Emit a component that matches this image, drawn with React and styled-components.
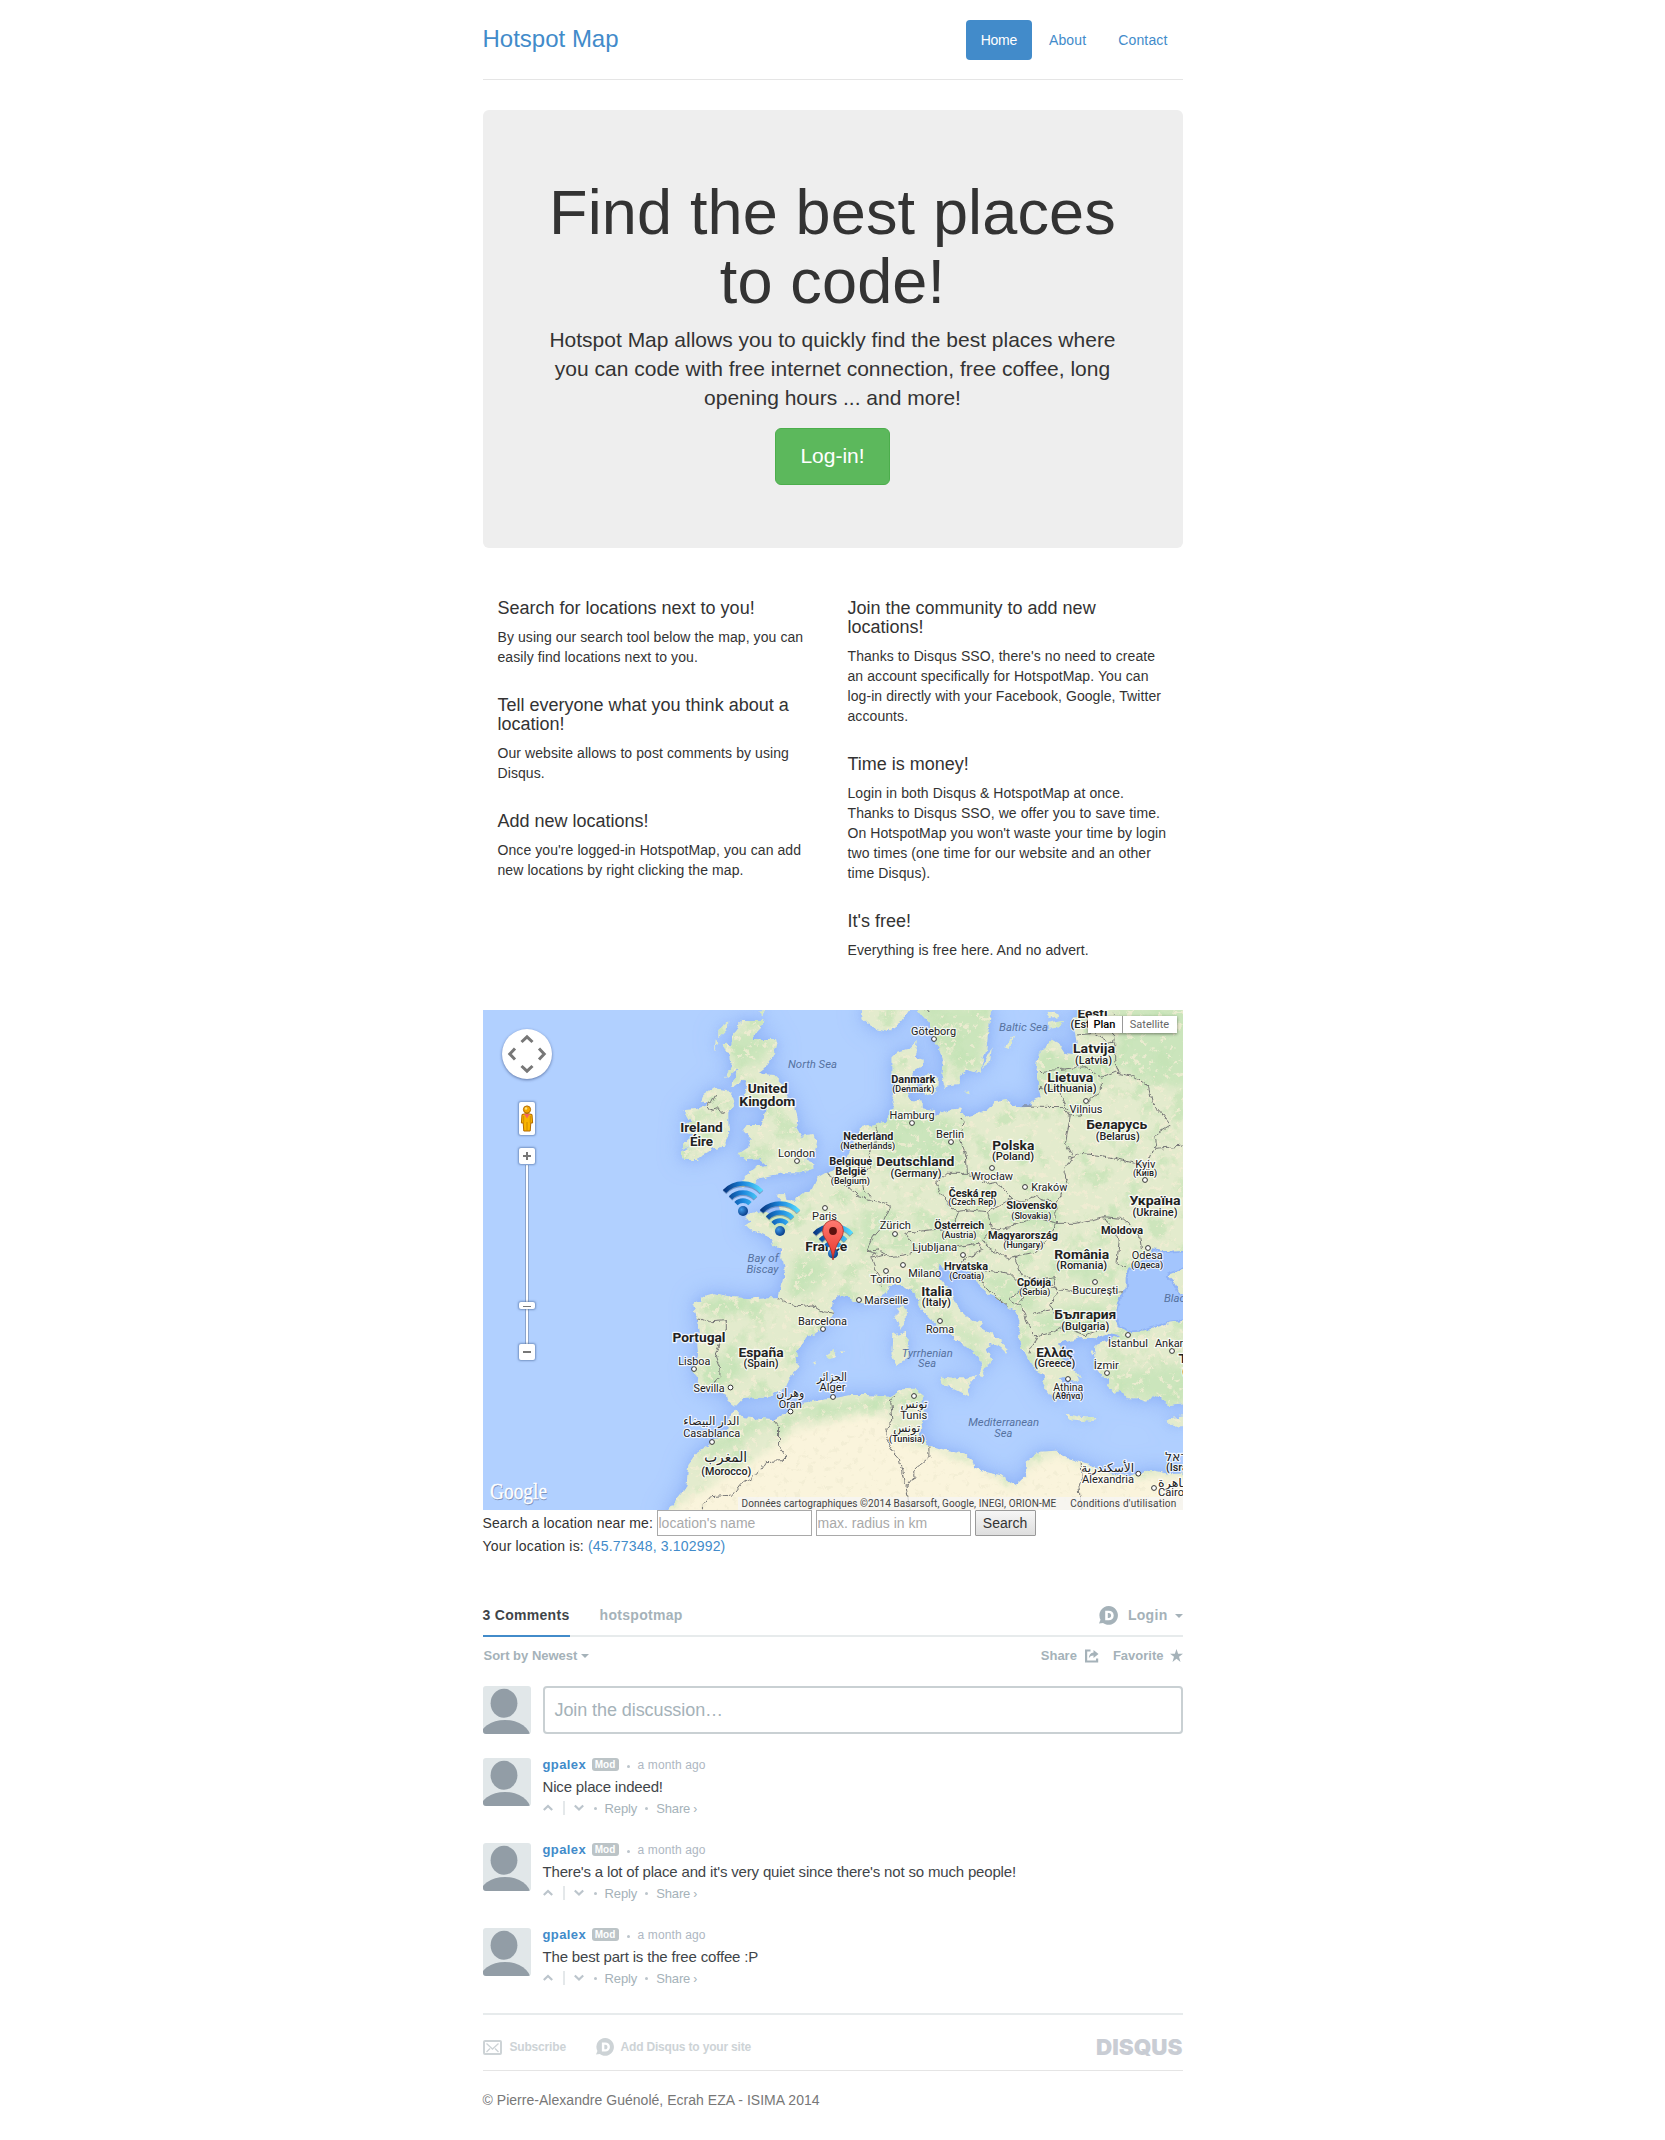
import React from "react";
import styled, { createGlobalStyle } from "styled-components";

const GlobalStyle = createGlobalStyle`
  *, *::before, *::after { box-sizing: border-box; }
  body {
    margin: 0;
    padding: 20px 0;
    background: #fff;
    color: #333;
    font: 14px/20px "Liberation Sans", Arial, sans-serif;
  }
  a { color: #428bca; text-decoration: none; }
`;

const Container = styled.div`
  width: 730px;
  margin: 0 auto;
  padding: 0 15px;
`;

/* ---------- header ---------- */

const Header = styled.header`
  display: flex;
  justify-content: space-between;
  height: 60px;
  border-bottom: 1px solid #e5e5e5;
  margin-bottom: 30px;
`;

const Brand = styled.a`
  font-size: 24px;
  line-height: 38px;
`;

const Nav = styled.nav`
  display: flex;
  gap: 2px;
  height: 40px;
`;

const NavLink = styled.a`
  padding: 10px 15px;
  border-radius: 4px;
  letter-spacing: ${(p) => (p.$active ? "-0.3px" : "0.14px")};
  color: ${(p) => (p.$active ? "#fff" : "#428bca")};
  background: ${(p) => (p.$active ? "#428bca" : "transparent")};
`;

/* ---------- hero ---------- */

const Jumbotron = styled.section`
  height: 438px;
  padding: 68px 55px 48px;
  border-radius: 6px;
  background: #eee;
  text-align: center;
`;

const HeroTitle = styled.h1`
  margin: 0 0 9px;
  font-size: 63px;
  font-weight: 400;
  line-height: 69px;
  letter-spacing: 0.15px;
`;

const HeroText = styled.p`
  margin: 0 5px 16px;
  font-size: 21px;
  line-height: 29px;
`;

const LoginButton = styled.button`
  height: 57px;
  padding: 0 24px 2px;
  border: 1px solid #4cae4c;
  border-radius: 6px;
  background: #5cb85c;
  color: #fff;
  font: 21px/27px "Liberation Sans", Arial, sans-serif;
`;

/* ---------- features ---------- */

const Features = styled.section`
  display: grid;
  grid-template-columns: 350px 350px;
  padding: 50px 0;
`;

const FeatureColumn = styled.div`
  display: flex;
  flex-direction: column;
  gap: 28px;
  padding: 0 12px 0 15px;
`;

const FeatureTitle = styled.h4`
  margin: 0 0 9px;
  padding-top: 1px;
  font-size: 18px;
  font-weight: 400;
  line-height: 19px;
`;

const FeatureText = styled.p`
  margin: 0;
  letter-spacing: 0.08px;
`;

/* ---------- map ---------- */

const MapFrame = styled.div`
  position: relative;
  height: 500px;
  overflow: hidden;
  background: #b1d0ff;
`;

const MapSvg = styled.svg`
  display: block;
`;

const PanControl = styled.div`
  position: absolute;
  left: 19px;
  top: 19px;
  width: 50px;
  height: 50px;
  border-radius: 50%;
  background: #fff;
  box-shadow: 0 1px 3px rgba(40, 60, 110, 0.6);
`;

const ControlBox = styled.div`
  position: absolute;
  left: 36px;
  top: ${(p) => p.$top}px;
  width: 16px;
  height: ${(p) => p.$height}px;
  display: flex;
  align-items: center;
  justify-content: center;
  border-radius: 2px;
  background: #fff;
  box-shadow: 0 0 2px 1px rgba(70, 100, 150, 0.55);
`;

const SliderTrack = styled.div`
  position: absolute;
  left: 42px;
  top: 155px;
  width: 4px;
  height: 179px;
  border: 1px solid #8ba4cc;
  border-width: 0 1px;
  background: #fff;
`;

const MapTypes = styled.div`
  position: absolute;
  right: 6px;
  top: 6px;
  display: flex;
  height: 17px;
  background: #fff;
  font: 11px/18px Roboto, sans-serif;
  box-shadow: 0 1px 3px rgba(0, 0, 0, 0.45);
`;

const MapType = styled.div`
  width: ${(p) => p.$width}px;
  text-align: center;
  color: ${(p) => (p.$active ? "#000" : "#666")};
  font-weight: ${(p) => (p.$active ? 500 : 400)};
  border-left: ${(p) => (p.$active ? "0" : "1px solid #999")};
`;

const Attribution = styled.div`
  position: absolute;
  right: 0;
  bottom: 0;
  display: flex;
  justify-content: space-between;
  width: 445px;
  height: 13px;
  padding: 0 6px 0 4px;
  background: rgba(245, 245, 245, 0.75);
  color: #444;
  font: 10px/13px Roboto, sans-serif;
  white-space: nowrap;
`;

const Credit = styled.span`
  letter-spacing: ${(p) => p.$spacing}px;
`;

/* Coordinates of the traced terrain use a 1568 x 1500 grid. */
const GRID = "scale(0.446429 0.333333)";

const MAINLAND =
  "M471 885L480 872 500 855 520 850 560 862 600 865 640 862 662 862 670 820 676 780 672 755 665 740 668 720 650 705 645 685 625 672 600 660 588 645 600 635 585 622 600 612 625 606 650 612 668 605 662 580 668 570 657 553 676 552 680 570 700 572 708 555 740 535 752 500 775 482 800 470 815 440 830 400 838 370 852 350 880 345 905 332 912 300 925 290 915 260 925 230 915 190 915 145 930 125 955 115 974 90 970 125 965 140 985 150 985 170 965 185 955 215 950 245 960 270 985 275 985 295 1010 300 1015 315 1040 300 1070 295 1082 320 1110 310 1140 290 1150 272 1175 267 1185 285 1205 292 1225 290 1232 270 1250 262 1245 240 1243 215 1240 180 1245 130 1260 110 1275 88 1290 100 1305 130 1320 132 1330 100 1325 60 1322 30 1335 10 1340 -20 1600 -20 1600 1180 1568 1180 1538 1185 1516 1165 1498 1155 1486 1175 1464 1165 1442 1165 1427 1140 1412 1145 1400 1130 1404 1110 1386 1095 1374 1065 1371 1035 1374 1005 1397 992 1427 978 1404 972 1375 985 1360 983 1337 985 1322 990 1300 998 1288 1000 1297 1020 1288 1035 1310 1060 1322 1085 1333 1112 1320 1115 1305 1100 1290 1105 1300 1120 1303 1150 1290 1145 1287 1175 1272 1160 1262 1140 1250 1115 1260 1100 1240 1085 1225 1055 1218 1035 1205 1010 1200 985 1205 960 1200 930 1195 905 1175 890 1150 865 1135 855 1110 825 1100 800 1080 775 1065 770 1055 800 1040 780 1022 765 1018 795 1035 825 1053 855 1064 895 1091 930 1120 940 1113 950 1143 975 1173 1010 1171 1028 1158 1010 1139 1000 1128 1015 1135 1035 1141 1050 1128 1070 1117 1105 1108 1100 1117 1075 1113 1045 1098 1025 1079 1005 1061 990 1038 965 1023 950 1001 925 982 895 971 865 960 840 938 825 915 825 900 850 882 865 859 880 837 880 814 860 799 855 784 870 781 900 785 912 770 945 744 970 725 980 703 1025 699 1045 709 1070 688 1100 680 1130 662 1145 643 1160 613 1160 583 1165 565 1190 550 1175 546 1155 527 1145 509 1140 490 1142 479 1135 482 1105 471 1085 482 1035 480 1005 486 975 482 935Z";
const AFRICA =
  "M553 1215L565 1202 583 1222 628 1228 650 1230 680 1205 710 1180 747 1172 785 1165 822 1155 859 1155 911 1160 938 1138 964 1136 988 1160 975 1185 993 1215 982 1245 979 1275 1001 1310 1031 1322 1076 1330 1098 1355 1100 1375 1128 1387 1158 1395 1191 1428 1218 1395 1218 1355 1247 1325 1285 1322 1300 1340 1344 1360 1404 1390 1449 1400 1494 1380 1540 1392 1600 1390 1600 1530 400 1530 415 1500 441 1455 456 1425 460 1365 482 1325 516 1295 546 1265Z";
const BLACK_SEA =
  "M1600 722L1540 728 1502 718 1490 740 1470 765 1450 775 1442 800 1442 835 1425 870 1416 920 1425 950 1450 964 1480 962 1500 952 1540 935 1600 925 1600 850 1561 850 1545 815 1530 795 1560 780 1600 765Z";
const ISLANDS =
  "M930 895L947 885 947 935 934 955 924 925ZM919 975L945 963 955 995 950 1045 926 1065 917 1035ZM1023 1100L1076 1105 1105 1097 1087 1125 1091 1160 1053 1135 1027 1120ZM1303 1212L1337 1220 1374 1225 1367 1236 1315 1228ZM1531 1235L1546 1223 1575 1218 1575 1245 1540 1248ZM766 1035L783 1020 792 1033 778 1048ZM800 1020L812 1022 806 1030ZM738 1062L746 1056 742 1068ZM1308 1068L1330 1085 1342 1108 1325 1098ZM1360 1020L1372 1024 1365 1032ZM1368 1058L1374 1062 1370 1072ZM848 -10L850 25 875 55 905 65 935 40 960 -10ZM970 -10L1000 40 1010 80 1022 120 1030 150 1027 195 1035 230 1068 225 1068 195 1085 180 1112 190 1117 165 1128 115 1132 65 1140 -10ZM1118 175L1140 112 1135 160ZM1170 115L1188 72 1180 120ZM1266 38L1300 30 1292 52 1266 56ZM1262 10L1280 5 1290 18 1270 25ZM955 225L970 222 972 240 958 248ZM990 195L1020 200 1016 245 990 255 985 225ZM1080 245L1088 240 1090 250Z";
const BRITAIN =
  "M780 45L850 45 845 70 820 95 815 105 885 105 890 125 875 160 855 190 835 205 880 210 905 235 920 270 945 310 955 345 948 365 965 395 1000 390 1012 410 1005 440 975 465 1000 475 1000 492 960 505 910 505 870 512 840 520 820 542 795 538 770 550 800 510 830 485 860 480 840 463 800 465 775 445 805 425 815 400 790 375 800 360 845 360 850 330 858 310 845 295 800 300 790 290 800 250 795 225 765 247 755 240 775 190 750 210 735 220 755 180 750 150 730 120 755 120 755 95 775 70ZM670 270L700 250 740 255 760 280 765 300 745 325 745 350 748 390 735 425 700 430 650 465 610 465 600 440 625 422 602 430 640 390 605 370 630 350 610 315 650 312 680 300 665 285ZM715 75L742 52 740 75 715 100ZM704 100L712 110 702 145ZM838 20L858 18 850 34ZM725 112L742 110 750 128 730 125Z";
const DESERT =
  "M415 1500L480 1450 560 1380 640 1320 690 1260 780 1235 850 1210 905 1220 930 1290 1001 1312 1100 1362 1191 1432 1225 1370 1285 1330 1400 1400 1600 1400 1600 1530 400 1530Z";

const FORESTS =
  "M700 745L760 735 780 800 730 850 680 855ZM845 620L905 600 890 690 850 720ZM880 300L930 300 1060 330 1080 420 1010 500 900 480ZM500 868L660 870 610 905 510 900ZM540 85L600 60 650 100 620 160 570 170ZM930 700L1100 665 1140 700 1000 735ZM1090 790L1190 800 1250 900 1200 900ZM1180 590L1290 590 1290 640 1200 650ZM1240 120L1400 170 1410 220 1250 230ZM1420 -10L1600 -10 1600 240 1500 220 1420 170ZM970 -10L1140 -10 1110 185 1040 150ZM1300 890L1400 880 1390 960 1250 970 1230 920ZM1380 1090L1600 1060 1600 1180 1450 1160ZM1010 900L1060 950 1130 990 1100 1010 1020 940ZM1340 700L1420 820 1300 800ZM490 1050L560 1040 600 1090 500 1130ZM510 1300L600 1230 640 1240 560 1310 480 1370ZM700 1190L900 1165 890 1200 720 1225Z";

const BORDERS =
  "M481 935L490 925 510 935 545 932 545 960 530 1000 520 1030 532 1070 530 1100 515 1120M660 865L680 880 710 890 735 885 760 905 785 910M650 1230L662 1250 662 1310 680 1340 670 1352 632 1355 615 1390 580 1420 560 1455 510 1460 485 1500M925 1155L913 1170 918 1230 900 1260 915 1320 935 1350 948 1430 957 1500M948 1430L965 1400 965 1380 1001 1340 1001 1312M1340 1362L1342 1400 1335 1430 1340 1500M772 485L780 505 800 510 815 530 840 560 870 570 900 580 913 590 900 630 895 650 875 680 860 720 880 730 870 745 900 735M883 350L880 400 865 430 868 470 850 500 855 540 870 560M860 725L885 720 910 740 945 735 975 720 955 690 945 670 970 665 1000 660 1050 655 1065 610M870 745L880 780 890 800 890 830M1015 520L1040 490 1085 490 1083 440 1070 390 1075 340 1068 325M1015 520L1030 560 1060 605 1090 600 1130 605 1165 580 1185 565M1085 490L1110 500 1130 525 1150 520 1170 540 1185 565 1210 575 1240 560 1260 570 1285 580 1310 520 1300 480 1320 440 1305 400 1315 320 1300 290 1207 288M1245 185L1280 180 1350 170 1385 205 1420 185M1310 318L1340 315 1360 270 1385 245 1385 215M1310 300L1290 245 1245 235M1420 190L1460 200 1490 225 1500 280 1520 310 1540 345 1515 365 1505 380 1510 415 1568 408M1310 445L1340 430 1400 440 1460 460 1490 465 1495 430 1510 415M1330 75L1370 70 1400 95 1415 100 1415 150 1425 190M1410 100L1415 50 1412 10M1130 605L1140 660 1180 650 1230 620 1285 640 1260 690 1235 730 1180 745 1130 715 1120 690 1140 660M1285 640L1330 640 1390 620 1430 625 1470 670 1475 720M1395 625L1425 690 1420 760 1440 770M1265 820L1290 840 1370 850 1435 845M1065 775L1085 740 1120 720M1100 775L1180 790 1210 830M1100 790L1140 850 1175 890M1190 740L1205 790 1230 810 1280 800 1285 850 1270 890 1290 920M1210 860L1200 880 1215 920 1225 960 1240 980 1225 1030M1240 980L1280 965 1300 950 1350 975 1380 960M1230 910L1270 900M1210 830L1180 870 1200 885M1000 720L1060 710 1110 700 1120 720M985 -5L1000 10M1282 585L1285 640";

const NORTH_IRISH_BORDER = "M708 265L695 290 678 298 690 315 712 308 725 325 740 322";

/* kind, text, centre x, baseline y, width */
const LABELS = [
  ["country", "United", 284.7, 83.3, 40], ["country", "Kingdom", 284.3, 96, 56],
  ["country", "Ireland", 218.5, 122.3, 42.5], ["country", "Éire", 218.5, 136, 23],
  ["sea", "North Sea", 329.5, 57.5, 49], ["city", "London", 313.5, 146.5, 37],
  ["city", "Paris", 341.5, 209.5, 25], ["country", "France", 343.3, 240.5, 42],
  ["sea", "Bay of", 280, 251.5, 31], ["sea", "Biscay", 279.5, 262.5, 32],
  ["city", "Göteborg", 450.5, 24.7, 45], ["sea", "Baltic Sea", 540.5, 20.7, 49],
  ["country", "Eesti", 609.5, 7.5, 30], ["sub", "(Estonia)", 609.5, 18, 44],
  ["country", "Latvija", 611, 43.3, 42], ["sub", "(Latvia)", 610.5, 53.5, 37],
  ["country", "Lietuva", 587.3, 71.5, 46], ["sub", "(Lithuania)", 587, 82, 53],
  ["city", "Vilnius", 603, 102.5, 33], ["minor", "Danmark", 430.3, 73, 44],
  ["tiny", "(Denmark)", 430.3, 82.3, 42], ["city", "Hamburg", 429, 109, 45],
  ["city", "Berlin", 467, 127.5, 28], ["minor", "Nederland", 385.3, 130, 50],
  ["tiny", "(Netherlands)", 384.7, 139.3, 55], ["country", "Polska", 530.3, 140, 42],
  ["sub", "(Poland)", 530, 150, 42], ["country", "Беларусь", 633.7, 119, 61],
  ["sub", "(Belarus)", 634.7, 130, 44], ["minor", "Belgique", 367.7, 154.7, 43],
  ["minor", "België", 367.7, 164.7, 31], ["tiny", "(Belgium)", 367.3, 174, 39],
  ["country", "Deutschland", 432.3, 156, 78], ["sub", "(Germany)", 433, 166.7, 51],
  ["city", "Wrocław", 509, 169.5, 42], ["city", "Kraków", 566.3, 180.5, 36],
  ["city", "Kyiv", 662.3, 158, 20], ["tiny", "(Київ)", 662, 166.3, 24],
  ["country", "Україна", 672, 195.3, 51], ["sub", "(Ukraine)", 672, 205.6, 45],
  ["minor", "Česká rep", 489.7, 186.5, 48], ["tiny", "(Czech Rep)", 489.3, 195.3, 48],
  ["minor", "Slovensko", 548.7, 199.3, 51], ["tiny", "(Slovakia)", 548.3, 208.6, 40],
  ["city", "Zürich", 412.3, 219.3, 31], ["minor", "Österreich", 476.3, 218.6, 50],
  ["tiny", "(Austria)", 476, 228, 35], ["minor", "Magyarország", 540, 228.6, 70],
  ["tiny", "(Hungary)", 540.3, 238, 40], ["minor", "Moldova", 639, 223.6, 42],
  ["city", "Ljubljana", 451.7, 240.7, 45], ["city", "Odesa", 664.3, 249.3, 31],
  ["country", "România", 598.7, 248.6, 55], ["sub", "(Romania)", 598.7, 259, 51],
  ["tiny", "(Одеса)", 664, 257.7, 32], ["city", "Torino", 402.7, 272.7, 31],
  ["city", "Milano", 441.7, 267, 33], ["minor", "Hrvatska", 483, 259.7, 44],
  ["tiny", "(Croatia)", 483.7, 268.7, 35], ["minor", "Србија", 551, 275.5, 34],
  ["tiny", "(Serbia)", 551.7, 284.7, 31], ["city", "Bucureşti", 612.3, 283.7, 46],
  ["country", "Italia", 453.7, 285.7, 31], ["sub", "(Italy)", 453.3, 295.5, 29],
  ["city", "Marseille", 403.3, 293.7, 44], ["city", "Roma", 457, 322.7, 28],
  ["country", "България", 602.3, 308.7, 62], ["sub", "(Bulgaria)", 602.3, 319.5, 48],
  ["sea", "Black Sea", 705, 291.5, 48], ["city", "İstanbul", 645, 336.7, 40],
  ["city", "Ankara", 689, 336.7, 34], ["country", "Türkiye", 720, 353, 49],
  ["sub", "(Turkey)", 720, 365, 42], ["sea", "Tyrrhenian", 444.3, 346.7, 51],
  ["sea", "Sea", 444, 357.3, 18], ["country", "Ελλάς", 571.7, 346.7, 37],
  ["sub", "(Greece)", 571.7, 357.3, 41], ["city", "İzmir", 623.3, 358.7, 25],
  ["city", "Athina", 585.3, 380.7, 30], ["tiny", "(Αθήνα)", 584.7, 389.3, 31],
  ["sea", "Mediterranean", 520.7, 415.7, 71], ["sea", "Sea", 520.3, 426.7, 18],
  ["arabic", "تونس", 431, 398.3, 27], ["city", "Tunis", 430.7, 408.7, 27],
  ["arabic", "تونس", 423.7, 422.3, 27], ["tiny", "(Tunisia)", 424, 432.3, 36],
  ["arabic", "الأسكندرية", 624.7, 461.5, 53], ["city", "Alexandria", 625, 472.7, 52],
  ["arabic", "القاهرة", 694, 476.5, 38], ["city", "Cairo", 688, 486, 26],
  ["arabic", "ישראל", 699, 451, 34], ["sub", "(Israel)", 700, 461.3, 34],
  ["city", "Barcelona", 339.5, 314.5, 49], ["country", "Portugal", 216, 331.7, 53],
  ["country", "España", 278, 346.7, 45], ["sub", "(Spain)", 278, 357.3, 35],
  ["city", "Lisboa", 211.3, 354.7, 32], ["city", "Sevilla", 226, 381.5, 31],
  ["arabic", "الجزائر", 349, 371, 30], ["city", "Alger", 349.5, 381.3, 26],
  ["arabic", "وهران", 307.3, 387.3, 28], ["city", "Oran", 307.3, 397.5, 23],
  ["arabic", "الدار البيضاء", 228.3, 415, 56], ["city", "Casablanca", 228.7, 427, 57],
  ["arabicLarge", "المغرب", 242.7, 452, 43], ["sub", "(Morocco)", 243.3, 464.5, 50],
];

const CITY_DOTS = [
  [314, 151], [342, 198], [451, 29], [603, 91], [429, 113], [468, 132], [509, 158],
  [542, 177], [662, 170], [412, 224], [480, 245], [665, 238], [403, 261], [420, 255],
  [612, 272], [376, 290], [457, 311], [645, 325], [689, 341], [624, 363], [585, 369],
  [431, 386], [655.3, 463.7], [671, 478], [340, 319], [211, 359], [247.5, 377.5],
  [350, 387], [307.5, 401.5], [229, 432],
];

const LABEL_STYLE = {
  country: { size: 13.5, weight: 700, halo: 2.6 },
  minor: { size: 11.5, weight: 700, halo: 2.4 },
  sub: { size: 11, weight: 500, halo: 2.2 },
  tiny: { size: 9.8, weight: 500, halo: 2 },
  city: { size: 11.3, weight: 400, halo: 2.4 },
  arabic: { size: 12, weight: 400, halo: 2.4 },
  arabicLarge: { size: 14.5, weight: 400, halo: 2.4 },
  sea: { size: 11.3, weight: 400, halo: 0 },
};

const MapText = styled.text`
  font-family: Roboto, "DejaVu Sans", sans-serif;
  font-size: ${(p) => LABEL_STYLE[p.$kind].size}px;
  font-weight: ${(p) => LABEL_STYLE[p.$kind].weight};
  font-style: ${(p) => (p.$kind === "sea" ? "italic" : "normal")};
  fill: ${(p) => (p.$kind === "sea" ? "#56729f" : "#222")};
  stroke: rgba(255, 255, 255, 0.8);
  stroke-width: ${(p) => LABEL_STYLE[p.$kind].halo}px;
  stroke-linejoin: round;
  paint-order: stroke;
  text-anchor: middle;
`;

const LogoText = styled.text`
  font: 23px "Liberation Serif", serif;
  fill: ${(p) => (p.$shadow ? "#7d93bd" : "#fff")};
  stroke: ${(p) => (p.$shadow ? "#7d93bd" : "#fff")};
  stroke-width: 0.3px;
`;

const WifiMarker = ({ x, y }) => (
  <g transform={`translate(${x} ${y})`}>
    <g fill="none" stroke="#12305f" strokeOpacity=".35" strokeWidth="5" transform="translate(0 1)">
      <path d="M-18.5 -19.5A25.5 25.5 0 0 1 18.5 -19.5" />
      <path d="M-12.5 -13.2A17.5 17.5 0 0 1 12.5 -13.2" />
    </g>
    <g fill="none" stroke="url(#wifi)" strokeWidth="4.6">
      <path d="M-18.5 -19.5A25.5 25.5 0 0 1 18.5 -19.5" />
      <path d="M-12.5 -13.2A17.5 17.5 0 0 1 12.5 -13.2" />
      <path d="M-7 -7.4A9.8 9.8 0 0 1 7 -7.4" />
    </g>
    <circle r="5" fill="url(#wifiDot)" />
  </g>
);

const EuropeMap = () => (
  <MapSvg width="700" height="500" viewBox="0 0 700 500">
    <defs>
      <filter id="glow" filterUnits="userSpaceOnUse" x="-30" y="-30" width="760" height="560">
        <feGaussianBlur stdDeviation="13" />
      </filter>
      <filter id="shore" filterUnits="userSpaceOnUse" x="-30" y="-30" width="760" height="560">
        <feGaussianBlur stdDeviation="4" />
      </filter>
      <filter id="rough" filterUnits="userSpaceOnUse" x="-10" y="-10" width="720" height="520" colorInterpolationFilters="sRGB">
        <feTurbulence type="fractalNoise" baseFrequency="0.14" numOctaves="3" seed="4" result="n" />
        <feDisplacementMap in="SourceGraphic" in2="n" scale="6" xChannelSelector="R" yChannelSelector="G" />
      </filter>
      <filter id="relief" filterUnits="userSpaceOnUse" x="-10" y="-10" width="720" height="520" colorInterpolationFilters="sRGB">
        <feTurbulence type="fractalNoise" baseFrequency="0.045" numOctaves="5" seed="9" result="n" />
        <feColorMatrix in="n" type="matrix" values="0 0 0 0 .765  0 0 0 0 .89  0 0 0 0 .71  5 0 0 0 -2.55" result="c" />
        <feComposite in="c" in2="SourceAlpha" operator="in" />
      </filter>
      <filter id="towns" filterUnits="userSpaceOnUse" x="-10" y="-10" width="720" height="520" colorInterpolationFilters="sRGB">
        <feTurbulence type="fractalNoise" baseFrequency="0.16" numOctaves="3" seed="22" result="n" />
        <feColorMatrix in="n" type="matrix" values="0 0 0 0 .95  0 0 0 0 .93  0 0 0 0 .83  0 9 0 0 -5.4" result="c" />
        <feComposite in="c" in2="SourceAlpha" operator="in" />
      </filter>
      <filter id="soft" filterUnits="userSpaceOnUse" x="-30" y="-30" width="760" height="560">
        <feGaussianBlur stdDeviation="4" />
      </filter>
      <linearGradient id="wifi" gradientUnits="userSpaceOnUse" x1="-19" y1="0" x2="19" y2="0">
        <stop offset="0" stopColor="#06357f" />
        <stop offset=".5" stopColor="#1c86dc" />
        <stop offset="1" stopColor="#55dcff" />
      </linearGradient>
      <radialGradient id="wifiDot" cx=".35" cy=".35" r=".7">
        <stop offset="0" stopColor="#3f9ae8" />
        <stop offset="1" stopColor="#063a86" />
      </radialGradient>
      <linearGradient id="pin" x1="0" y1="0" x2="0" y2="1">
        <stop offset="0" stopColor="#ff7a70" />
        <stop offset="1" stopColor="#e8352c" />
      </linearGradient>
      <g id="land">
        <g transform={GRID}>
          <path d={MAINLAND} />
          <path d={AFRICA} />
          <path d={ISLANDS} />
        </g>
        <path d={BRITAIN} transform="translate(-3 -5) scale(.333333)" />
      </g>
      <clipPath id="landClip">
        <path d={MAINLAND} transform={GRID} />
        <path d={AFRICA} transform={GRID} />
        <path d={ISLANDS} transform={GRID} />
        <path d={BRITAIN} transform="translate(-3 -5) scale(.333333)" />
      </clipPath>
    </defs>

    <rect width="700" height="500" fill="#b1d0ff" />
    <use href="#land" fill="#86abf5" opacity=".8" filter="url(#glow)" />
    <use href="#land" fill="#86abf5" opacity=".45" filter="url(#shore)" />

    <g filter="url(#rough)">
      <use href="#land" fill="#e3ebcd" />
      <g clipPath="url(#landClip)">
        <g filter="url(#soft)" opacity=".75">
          <path d={FORESTS} transform={GRID} fill="#c3e3b6" />
        </g>
        <use href="#land" filter="url(#relief)" opacity=".7" />
        <g filter="url(#soft)">
          <path d={DESERT} transform={GRID} fill="#faf4dc" />
        </g>
        <use href="#land" filter="url(#towns)" opacity=".8" />
      </g>
      <path d={BLACK_SEA} transform={GRID} fill="#a3c5fd" stroke="#90b3f6" strokeWidth="5" />
      <g fill="none" stroke="#777" strokeWidth="1">
        <g transform={GRID}><path d={BORDERS} vectorEffect="non-scaling-stroke" /></g>
        <g transform="translate(-3 -5) scale(.333333)">
          <path d={NORTH_IRISH_BORDER} vectorEffect="non-scaling-stroke" />
        </g>
      </g>
    </g>

    {CITY_DOTS.map(([x, y]) => (
      <circle key={`${x}-${y}`} cx={x} cy={y} r="2.4" fill="#fff" stroke="#333" strokeWidth="1" />
    ))}
    {LABELS.map(([kind, text, x, y, width]) => (
      <MapText key={`${text}-${x}`} $kind={kind} x={x} y={y} textLength={width} lengthAdjust="spacingAndGlyphs">
        {text}
      </MapText>
    ))}

    <WifiMarker x={260} y={201} />
    <WifiMarker x={297} y={221} />
    <WifiMarker x={350} y={243.5} />
    <path
      d="M350 250C349 241 346 234 342.500 229C340.500 226 339.700 223.500 339.700 220.500A10.300 10.300 0 0 1 360.300 220.500C360.300 223.500 359.500 226 357.500 229C354 234 351 241 350 250Z"
      fill="url(#pin)" stroke="#a82a22" strokeWidth=".8"
    />
    <circle cx="350" cy="221" r="3.900" fill="#5c120e" />

    <g aria-hidden="true">
      <LogoText $shadow x="7.700" y="489.900" textLength="57" lengthAdjust="spacingAndGlyphs">Google</LogoText>
    </g>
    <LogoText x="7" y="489" textLength="57" lengthAdjust="spacingAndGlyphs">Google</LogoText>
  </MapSvg>
);

const PanArrows = () => (
  <svg width="50" height="50" viewBox="0 0 50 50" fill="none" stroke="#777" strokeWidth="3">
    <path d="M19.500 13L25 7.800 30.500 13M19.500 37L25 42.200 30.500 37M13 19.500L7.800 25 13 30.500M37 19.500L42.200 25 37 30.500" />
  </svg>
);

const Pegman = () => (
  <svg width="14" height="30" viewBox="0 0 14 30">
    <path d="M2 10.500Q7 8.500 12 10.500L12.600 19H10.800L10.200 27H3.800L3.200 19H1.400Z" fill="#f9b400" stroke="#b36b00" strokeWidth="1" />
    <path d="M7 18V27M3.700 12V19M10.300 12V19" stroke="#c98200" strokeWidth=".8" />
    <path d="M4 10H10L7 14.500Z" fill="#f2665e" />
    <circle cx="7" cy="5.500" r="3.600" fill="#f5a800" stroke="#b36b00" strokeWidth="1" />
    <circle cx="6" cy="4.500" r="1.200" fill="#ffdf7c" />
  </svg>
);

const ZoomSign = ({ plus, thin }) => (
  <svg width="8" height="8" viewBox="0 0 8 8" stroke="#777" strokeWidth={thin ? 1 : 2}>
    <path d={plus ? "M0 4H8M4 0V8" : thin ? "M0 4.500H8" : "M0 4H8"} />
  </svg>
);

/* ---------- search ---------- */

const SearchRow = styled.form`
  display: flex;
  height: 26px;
  line-height: 26px;
`;

const SearchLabel = styled.label`
  width: 174px;
  white-space: nowrap;
  letter-spacing: 0.12px;
`;

const SearchInput = styled.input`
  width: 155px;
  height: 26px;
  margin-right: 4px;
  padding: 1px;
  border: 1px solid #a9a9a9;
  font: 14px "Liberation Sans", Arial, sans-serif;
  &::placeholder { color: #a9a9a9; }
`;

const SearchButton = styled.button`
  width: 61px;
  height: 26px;
  padding: 0;
  border: 1px solid #999;
  border-radius: 1px;
  background: linear-gradient(#f6f6f6, #dedede);
  color: #333;
  font: 14px "Liberation Sans", Arial, sans-serif;
`;

const LocationLine = styled.p`
  margin: 0 0 44px;
  letter-spacing: 0.18px;
`;

/* ---------- comments ---------- */

const ThreadNav = styled.div`
  display: flex;
  align-items: stretch;
  gap: 30px;
  height: 37px;
  border-bottom: 2px solid #e7ebec;
  font-weight: 700;
  line-height: 30px;
  letter-spacing: 0.3px;
`;

const ThreadTab = styled.div`
  height: 37px;
  color: ${(p) => (p.$active ? "#3f4549" : "#a5b2b9")};
  border-bottom: ${(p) => (p.$active ? "2px solid #428bca" : "0")};
`;

const LoginMenu = styled.div`
  display: flex;
  align-items: center;
  height: 30px;
  margin-left: auto;
  color: #a5b2b9;
`;

const MenuText = styled.span`
  margin: 0 7px 0 10px;
`;

const Caret = styled.span`
  width: 0;
  height: 0;
  margin-top: ${(p) => p.$drop || 0}px;
  border: 4px solid transparent;
  border-top-color: #a5b2b9;
  border-bottom: 0;
`;

const SortRow = styled.div`
  display: flex;
  align-items: center;
  height: 37px;
  margin-bottom: 12px;
  padding-left: 1px;
  color: #a5b2b9;
  font-size: 13px;
  font-weight: 700;
`;

const SortLabel = styled.span`
  margin-right: 4px;
`;

const ThreadActions = styled.div`
  display: flex;
  align-items: center;
  margin-left: auto;
`;

const ActionText = styled.span`
  margin-right: ${(p) => p.$gap}px;
`;

const Composer = styled.div`
  display: flex;
  gap: 12px;
  height: 48px;
  margin-bottom: 24px;
`;

const ComposerBox = styled.div`
  flex: 1;
  padding-left: 10px;
  border: 2px solid #c9d0d3;
  border-radius: 4px;
  color: #a5b2b9;
  font-size: 18px;
  line-height: 45px;
  letter-spacing: -0.08px;
`;

const AvatarSvg = styled.svg`
  flex: none;
  border-radius: 3px;
  background: #e1e7e9;
`;

const Comment = styled.article`
  display: flex;
  gap: 12px;
  height: 85px;
`;

const CommentMeta = styled.div`
  display: flex;
  align-items: center;
  height: 13px;
  line-height: 13px;
  font-size: 12px;
  color: #aeb7c2;
`;

const Author = styled.a`
  width: 49px;
  font-size: 13px;
  font-weight: 700;
  letter-spacing: 0.4px;
`;

const Badge = styled.span`
  width: 27px;
  height: 13px;
  margin-right: 8px;
  border-radius: 3px;
  background: #bcc4c7;
  color: #fff;
  font-size: 10px;
  font-weight: 700;
  text-align: center;
`;

const Bullet = styled.span`
  width: 3px;
  height: 3px;
  margin: ${(p) => p.$margin};
  border-radius: 50%;
  background: #bcc5cc;
`;

const PostedAt = styled.span`
  padding-top: 1px;
  letter-spacing: 0.13px;
`;

const Message = styled.p`
  margin: 7px 0 5px;
  height: 18px;
  line-height: 18px;
  font-size: 15px;
  color: #3f4549;
  letter-spacing: -0.17px;
`;

const CommentActions = styled.div`
  display: flex;
  align-items: center;
  height: 14px;
  color: #a5b2b9;
  font-size: 13px;
`;

const ActionLink = styled.span`
  padding-top: 1px;
  letter-spacing: -0.12px;
`;

const VoteDivider = styled.span`
  width: 2px;
  height: 14px;
  margin: 0 9px 0 10px;
  background: #e4e8ea;
`;

const More = styled.span`
  margin-left: 3px;
  padding-top: 1px;
  font-size: 12px;
`;

const ThreadFooter = styled.footer`
  display: flex;
  align-items: center;
  height: 57px;
  padding-top: 9px;
  border-top: 2px solid #e7ebec;
  color: #cdd3d6;
  font-size: 12px;
  font-weight: 700;
`;

const FooterLink = styled.span`
  margin-left: ${(p) => p.$before}px;
  width: ${(p) => p.$width}px;
  letter-spacing: -0.18px;
  white-space: nowrap;
`;

const DisqusWordmark = styled.svg`
  margin-left: auto;
  font: 900 21.500px Inter, sans-serif;
  fill: #c9cdd4;
`;

const PageFooter = styled.footer`
  padding-top: 19px;
  border-top: 1px solid #e5e5e5;
  color: #777;
  letter-spacing: 0.03px;
`;

const Avatar = () => (
  <AvatarSvg width="48" height="48" viewBox="0 0 48 48" fill="#929da6">
    <ellipse cx="21" cy="17.300" rx="13.400" ry="14.500" />
    <ellipse cx="22" cy="52" rx="25.500" ry="18" />
  </AvatarSvg>
);

const DisqusMark = ({ size, color }) => (
  <svg width={size} height={size} viewBox="0 0 19 19">
    <path fill={color} fillRule="evenodd" d="M9.700 0A9.300 9.400 0 1 1 4 16.900L0 17.400 1.500 13.700A9.300 9.300 0 0 1 9.700 0ZM6.200 4.700V14.200H9.600C12.800 14.200 14.700 12.300 14.700 9.400S12.800 4.700 9.700 4.700ZM8.800 7H9.700C11.200 7 12.100 7.900 12.100 9.400S11.200 11.900 9.700 11.900H8.800Z" />
  </svg>
);

const ShareIcon = () => (
  <svg width="14" height="14" viewBox="0 0 14 14">
    <path fill="#a5b2b9" d="M0 .5H5.500V2.500H2.200V11.500H11V9.500H13.200V13.500H0Z" />
    <path fill="#a5b2b9" d="M8.500 1L13.500 5 8.500 9V6.600C6.500 6.600 5.200 7.200 3.800 9.300 4 5.700 5.500 3.700 8.500 3.400Z" />
  </svg>
);

const StarIcon = () => (
  <svg width="13" height="13" viewBox="0 0 13 13">
    <path fill="#a5b2b9" d="M6.500 0L8.100 4.700H13L9 7.700 10.500 13 6.500 9.800 2.500 13 4 7.700 0 4.700H4.900Z" />
  </svg>
);

const Vote = ({ down }) => (
  <svg width="10" height="8" viewBox="0 0 10 8" fill="none" stroke="#bcc5cc" strokeWidth="2.200">
    <path d={down ? "M.8 1.500L5 5.500 9.200 1.500" : "M.8 6L5 2 9.200 6"} />
  </svg>
);

const MailIcon = () => (
  <svg width="19" height="15" viewBox="0 0 19 15" fill="none" stroke="#cdd3d6">
    <rect x="1" y="1" width="17" height="13" rx="1" strokeWidth="2" />
    <path d="M3.500 3.500L9.500 9 15.500 3.500M3.500 12L7 8.500M15.500 12L12 8.500" strokeWidth="1.300" />
  </svg>
);

const FEATURES = [
  [
    ["Search for locations next to you!", "By using our search tool below the map, you can easily find locations next to you."],
    ["Tell everyone what you think about a location!", "Our website allows to post comments by using Disqus."],
    ["Add new locations!", "Once you're logged-in HotspotMap, you can add new locations by right clicking the map."],
  ],
  [
    ["Join the community to add new locations!", "Thanks to Disqus SSO, there's no need to create an account specifically for HotspotMap. You can log-in directly with your Facebook, Google, Twitter accounts."],
    ["Time is money!", "Login in both Disqus & HotspotMap at once. Thanks to Disqus SSO, we offer you to save time. On HotspotMap you won't waste your time by login two times (one time for our website and an other time Disqus)."],
    ["It's free!", "Everything is free here. And no advert."],
  ],
];

const COMMENTS = [
  "Nice place indeed!",
  "There's a lot of place and it's very quiet since there's not so much people!",
  "The best part is the free coffee :P",
];

export default function App() {
  return (
    <>
      <GlobalStyle />
      <Container>
        <Header>
          <Brand href="#">Hotspot Map</Brand>
          <Nav>
            <NavLink href="#" $active>Home</NavLink>
            <NavLink href="#">About</NavLink>
            <NavLink href="#">Contact</NavLink>
          </Nav>
        </Header>

        <Jumbotron>
          <HeroTitle>Find the best places to code!</HeroTitle>
          <HeroText>
            Hotspot Map allows you to quickly find the best places where you can code with free
            internet connection, free coffee, long opening hours ... and more!
          </HeroText>
          <LoginButton>Log-in!</LoginButton>
        </Jumbotron>

        <Features>
          {FEATURES.map((column, i) => (
            <FeatureColumn key={i}>
              {column.map(([title, text]) => (
                <div key={title}>
                  <FeatureTitle>{title}</FeatureTitle>
                  <FeatureText>{text}</FeatureText>
                </div>
              ))}
            </FeatureColumn>
          ))}
        </Features>

        <MapFrame>
          <EuropeMap />
          <PanControl><PanArrows /></PanControl>
          <ControlBox $top={92} $height={33}><Pegman /></ControlBox>
          <SliderTrack />
          <ControlBox $top={138} $height={16}><ZoomSign plus /></ControlBox>
          <ControlBox $top={292} $height={7}><ZoomSign thin /></ControlBox>
          <ControlBox $top={334} $height={16}><ZoomSign /></ControlBox>
          <MapTypes>
            <MapType $active $width={34}>Plan</MapType>
            <MapType $width={55}>Satellite</MapType>
          </MapTypes>
          <Attribution>
            <Credit $spacing={0.08}>Données cartographiques ©2014 Basarsoft, Google, INEGI, ORION-ME</Credit>
            <Credit $spacing={0.2}>Conditions d'utilisation</Credit>
          </Attribution>
        </MapFrame>

        <SearchRow>
          <SearchLabel>Search a location near me:</SearchLabel>
          <SearchInput placeholder="location's name" />
          <SearchInput placeholder="max. radius in km" />
          <SearchButton type="button">Search</SearchButton>
        </SearchRow>
        <LocationLine>
          Your location is: <a href="#">(45.77348, 3.102992)</a>
        </LocationLine>

        <ThreadNav>
          <ThreadTab $active>3 Comments</ThreadTab>
          <ThreadTab>hotspotmap</ThreadTab>
          <LoginMenu>
            <DisqusMark size={19} color="#a5b2b9" />
            <MenuText>Login</MenuText>
            <Caret $drop={2} />
          </LoginMenu>
        </ThreadNav>
        <SortRow>
          <SortLabel>Sort by Newest</SortLabel>
          <Caret $drop={1} />
          <ThreadActions>
            <ActionText $gap={8}>Share</ActionText>
            <ShareIcon />
            <ActionText $gap={14} />
            <ActionText $gap={6}>Favorite</ActionText>
            <StarIcon />
          </ThreadActions>
        </SortRow>

        <Composer>
          <Avatar />
          <ComposerBox>Join the discussion…</ComposerBox>
        </Composer>

        {COMMENTS.map((message) => (
          <Comment key={message}>
            <Avatar />
            <div>
              <CommentMeta>
                <Author href="#">gpalex</Author>
                <Badge>Mod</Badge>
                <Bullet $margin="3px 8px 0 0" />
                <PostedAt>a month ago</PostedAt>
              </CommentMeta>
              <Message>{message}</Message>
              <CommentActions>
                <Vote />
                <VoteDivider />
                <Vote down />
                <Bullet $margin="0 8px 0 10px" />
                <ActionLink>Reply</ActionLink>
                <Bullet $margin="0 8px" />
                <ActionLink>Share</ActionLink>
                <More>›</More>
              </CommentActions>
            </div>
          </Comment>
        ))}

        <ThreadFooter>
          <MailIcon />
          <FooterLink $before={8} $width={86}>Subscribe</FooterLink>
          <DisqusMark size={18} color="#cdd3d6" />
          <FooterLink $before={7} $width={140}>Add Disqus to your site</FooterLink>
          <DisqusWordmark width="87" height="18" viewBox="0 0 87 18">
            <text x="0" y="17" textLength="86.500" lengthAdjust="spacingAndGlyphs">DISQUS</text>
          </DisqusWordmark>
        </ThreadFooter>
        <PageFooter>© Pierre-Alexandre Guénolé, Ecrah EZA - ISIMA 2014</PageFooter>
      </Container>
    </>
  );
}
